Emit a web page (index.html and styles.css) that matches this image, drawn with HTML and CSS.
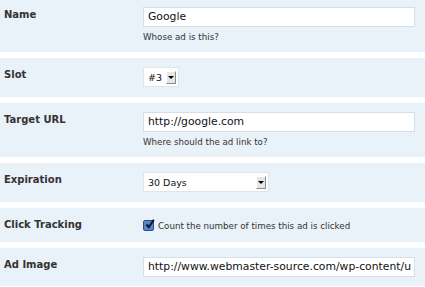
FILE: index.html
```html
<!DOCTYPE html>
<html>
<head>
<meta charset="utf-8">
<link rel="stylesheet" href="styles.css">
</head>
<body>
<div class="form">
  <div class="row first">
    <div class="label">Name</div>
    <div class="field">
      <div class="input">Google</div>
      <div class="help">Whose ad is this?</div>
    </div>
  </div>
  <div class="row">
    <div class="label">Slot</div>
    <div class="field">
      <div class="select small"><span class="val">#3</span><span class="btn"><span class="arrow"></span></span></div>
    </div>
  </div>
  <div class="row">
    <div class="label">Target URL</div>
    <div class="field">
      <div class="input">http://google.com</div>
      <div class="help">Where should the ad link to?</div>
    </div>
  </div>
  <div class="row">
    <div class="label">Expiration</div>
    <div class="field">
      <div class="select wide"><span class="val">30 Days</span><span class="btn"><span class="arrow"></span></span></div>
    </div>
  </div>
  <div class="row">
    <div class="label">Click Tracking</div>
    <div class="field check">
      <span class="box"><svg width="11" height="11" viewBox="0 0 11 11"><path d="M2.5 5.5 L4.8 8.2 L9.8 0.8" fill="none" stroke="#0b1530" stroke-width="2"/></svg></span>
      <span class="help inline">Count the number of times this ad is clicked</span>
    </div>
  </div>
  <div class="row">
    <div class="label">Ad Image</div>
    <div class="field">
      <div class="input">http://www.webmaster-source.com/wp-content/u</div>
    </div>
  </div>
</div>
</body>
</html>
```

FILE: styles.css
```css
html, body {
  margin: 0;
  padding: 0;
  background: #ffffff;
}
body {
  font-family: "DejaVu Sans", "Liberation Sans", sans-serif;
  color: #333333;
  overflow: hidden;
}
.form {
  display: flex;
  flex-direction: column;
  gap: 6px;
}
.row {
  display: flex;
  background: #e9f1f9;
  padding: 9px 0 9px 0;
}
.row.first {
  padding-top: 7px;
}
.label {
  width: 139px;
  padding-left: 4px;
  padding-top: 1px;
  font-weight: bold;
  font-size: 10px;
  line-height: 14px;
  color: #333333;
  flex: none;
}
.field {
  flex: 1;
  padding-right: 10px;
  min-width: 0;
}
.input {
  box-sizing: border-box;
  height: 20px;
  width: 272px;
  background: #ffffff;
  border: 1px solid #d3dfea;
  font-size: 10.8px;
  line-height: 18px;
  padding: 0 4px;
  color: #111111;
  white-space: nowrap;
  overflow: hidden;
}
.help {
  margin-top: 4px;
  font-size: 8.7px;
  line-height: 12px;
  color: #333333;
}
.select {
  box-sizing: border-box;
  height: 20px;
  margin-bottom: 1px;
  background: #ffffff;
  border: 1px solid #dde6ee;
  display: flex;
  align-items: center;
  font-size: 9.5px;
  color: #111111;
  padding: 0 2px 0 4px;
}
.select.small { width: 36px; }
.select.wide { width: 126px; }
.select .val { flex: 1; }
.btn {
  box-sizing: border-box;
  width: 10px;
  height: 13px;
  background: #e6e6e6;
  border-top: 1px solid #ffffff;
  border-left: 1px solid #ffffff;
  border-right: 1px solid #8a8a8a;
  border-bottom: 1px solid #8a8a8a;
  display: flex;
  align-items: center;
  justify-content: center;
}
.arrow {
  width: 0;
  height: 0;
  border-left: 3px solid transparent;
  border-right: 3px solid transparent;
  border-top: 3px solid #000000;
}
.check {
  display: flex;
  align-items: center;
  gap: 4px;
  height: 16px;
}
.box {
  box-sizing: border-box;
  width: 11px;
  height: 11px;
  background: #5b86c6;
  border: 1px solid #2f4f86;
  border-radius: 2px;
  display: flex;
  position: relative;
}
.box svg {
  position: absolute;
  left: 0;
  top: -2px;
}
.help.inline {
  margin-top: 1px;
}
```
